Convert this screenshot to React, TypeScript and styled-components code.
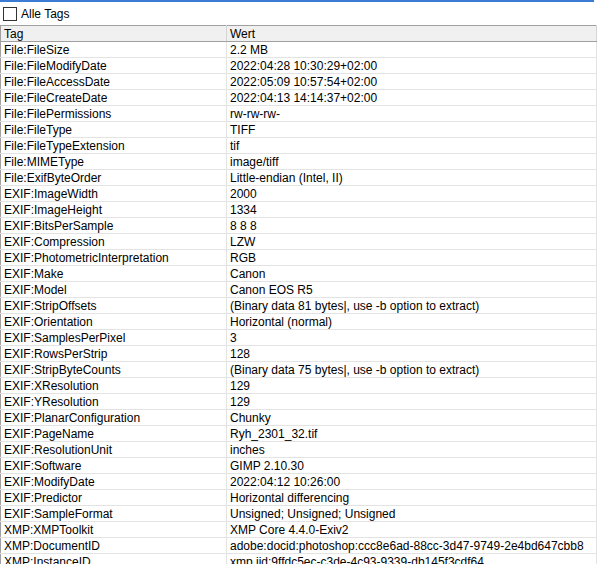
import styled, { createGlobalStyle } from "styled-components";

const GlobalStyle = createGlobalStyle`
  html, body {
    margin: 0;
    padding: 0;
    background: #ffffff;
    overflow: hidden;
  }
  body {
    font-family: "Liberation Sans", Arial, sans-serif;
    font-size: 12px;
    color: #000;
  }
`;

const rows: [string, string][] = [
  ["File:FileSize", "2.2 MB"],
  ["File:FileModifyDate", "2022:04:28 10:30:29+02:00"],
  ["File:FileAccessDate", "2022:05:09 10:57:54+02:00"],
  ["File:FileCreateDate", "2022:04:13 14:14:37+02:00"],
  ["File:FilePermissions", "rw-rw-rw-"],
  ["File:FileType", "TIFF"],
  ["File:FileTypeExtension", "tif"],
  ["File:MIMEType", "image/tiff"],
  ["File:ExifByteOrder", "Little-endian (Intel, II)"],
  ["EXIF:ImageWidth", "2000"],
  ["EXIF:ImageHeight", "1334"],
  ["EXIF:BitsPerSample", "8 8 8"],
  ["EXIF:Compression", "LZW"],
  ["EXIF:PhotometricInterpretation", "RGB"],
  ["EXIF:Make", "Canon"],
  ["EXIF:Model", "Canon EOS R5"],
  ["EXIF:StripOffsets", "(Binary data 81 bytes|, use -b option to extract)"],
  ["EXIF:Orientation", "Horizontal (normal)"],
  ["EXIF:SamplesPerPixel", "3"],
  ["EXIF:RowsPerStrip", "128"],
  ["EXIF:StripByteCounts", "(Binary data 75 bytes|, use -b option to extract)"],
  ["EXIF:XResolution", "129"],
  ["EXIF:YResolution", "129"],
  ["EXIF:PlanarConfiguration", "Chunky"],
  ["EXIF:PageName", "Ryh_2301_32.tif"],
  ["EXIF:ResolutionUnit", "inches"],
  ["EXIF:Software", "GIMP 2.10.30"],
  ["EXIF:ModifyDate", "2022:04:12 10:26:00"],
  ["EXIF:Predictor", "Horizontal differencing"],
  ["EXIF:SampleFormat", "Unsigned; Unsigned; Unsigned"],
  ["XMP:XMPToolkit", "XMP Core 4.4.0-Exiv2"],
  ["XMP:DocumentID", "adobe:docid:photoshop:ccc8e6ad-88cc-3d47-9749-2e4bd647cbb8"],
  ["XMP:InstanceID", "xmp.iid:9ffdc5ec-c3de-4c93-9339-db145f3cdf64"],
];

const Window = styled.div`
  width: 597px;
  height: 564px;
  display: flex;
  flex-direction: column;
  overflow: hidden;
`;

const AccentBar = styled.div`
  height: 2px;
  width: 594px;
  background: #3a7bd5;
  flex-shrink: 0;
`;

const Toolbar = styled.label`
  height: 23px;
  display: flex;
  align-items: center;
  gap: 4px;
  padding-left: 3px;
  flex-shrink: 0;
`;

const CheckBox = styled.span`
  width: 12px;
  height: 12px;
  margin-top: 1px;
  border: 1px solid #333333;
  background: #ffffff;
  box-sizing: content-box;
`;

const Label = styled.span`
  font-size: 12px;
  line-height: 15px;
  padding-top: 2px;
`;

const Table = styled.table`
  border-collapse: collapse;
  table-layout: fixed;
  width: 597px;
  border-left: 1px solid #a0a0a0;
  border-top: 1px solid #a0a0a0;
`;

const HeadCell = styled.th`
  height: 14px;
  padding: 1px 0 0 3px;
  background: #f0f0f0;
  border-bottom: 1px solid #a0a0a0;
  border-right: 1px solid #d5d5d5;
  font-weight: 400;
  text-align: left;
  line-height: 14px;
  white-space: nowrap;
  overflow: hidden;
`;

const Cell = styled.td`
  height: 14px;
  padding: 1px 0 0 3px;
  border-bottom: 1px solid #e3e3e3;
  border-right: 1px solid #e3e3e3;
  line-height: 14px;
  white-space: nowrap;
  overflow: hidden;
`;

export default function App() {
  return (
    <Window>
      <GlobalStyle />
      <AccentBar />
      <Toolbar>
        <CheckBox />
        <Label>Alle Tags</Label>
      </Toolbar>
      <Table>
        <colgroup>
          <col style={{ width: 226 }} />
          <col />
        </colgroup>
        <thead>
          <tr>
            <HeadCell>Tag</HeadCell>
            <HeadCell>Wert</HeadCell>
          </tr>
        </thead>
        <tbody>
          {rows.map(([tag, value]) => (
            <tr key={tag}>
              <Cell>{tag}</Cell>
              <Cell>{value}</Cell>
            </tr>
          ))}
        </tbody>
      </Table>
    </Window>
  );
}
